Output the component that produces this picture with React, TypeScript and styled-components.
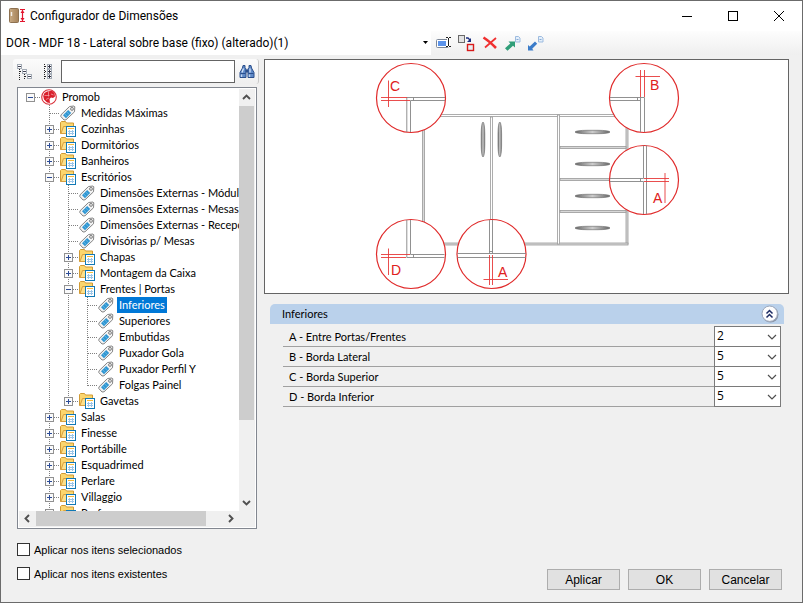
import React, { useState } from 'react';
import styled, { createGlobalStyle, css } from 'styled-components';

const GlobalStyle = createGlobalStyle`
  *, *::before, *::after { box-sizing: border-box; }
  body { margin: 0; background: #fff; }
  button, input, select { font: inherit; color: inherit; margin: 0; }
`;

const uiFont = 'Roboto, "Open Sans", sans-serif';
const listFont = 'Lato, Roboto, sans-serif';
const formFont = '"Liberation Sans", Arial, sans-serif';

const Window = styled.div`
  display: flex;
  flex-direction: column;
  height: calc(100vh - 7px);
  min-height: 360px;
  margin-right: 9px;
  border: 1px solid #6b6b6b;
  background: #f0f0f0;
  color: #000;
  font: 11px/16px ${listFont};
`;

const TitleBar = styled.header`
  display: flex;
  align-items: center;
  flex: none;
  height: 30px;
  padding-left: 8px;
  background: #fff;
`;

const Title = styled.h1`
  flex: 1;
  margin: 0 0 0 4px;
  font: 12px/16px ${uiFont};
`;

const CaptionButton = styled.button`
  display: flex;
  align-items: center;
  justify-content: center;
  width: 46px;
  height: 29px;
  padding: 0;
  border: 0;
  background: transparent;
`;

const Toolbar = styled.div`
  display: flex;
  align-items: center;
  flex: none;
  height: 24px;
  background: linear-gradient(#fdfdfd, #efefef);
`;

const ModelPicker = styled.div`
  display: grid;
  grid-template-columns: 1fr 12px;
  align-items: center;
  width: 430px;
  height: 24px;
  margin-right: 1px;
  background: #fff;
`;

const ModelSelect = styled.select`
  grid-area: 1 / 1 / 2 / 3;
  height: 24px;
  padding: 0 12px 0 5px;
  border: 0;
  appearance: none;
  background: transparent;
  font: 12px/16px ${uiFont};
`;

const SelectArrow = styled.svg`
  grid-area: 1 / 2;
  justify-self: center;
  pointer-events: none;
`;

const ToolButton = styled.button`
  display: flex;
  align-items: center;
  justify-content: center;
  flex: none;
  width: 23px;
  height: 22px;
  padding: 0;
  border: 0;
  background: transparent;
`;

const Body = styled.main`
  display: grid;
  grid-template-columns: 246px 1fr;
  flex: 1;
  min-height: 0;
  gap: 5px;
  padding: 4px 13px 12px 12px;
`;

const Sidebar = styled.aside`
  display: flex;
  flex-direction: column;
  min-height: 0;
  padding-bottom: 10px;
`;

const SearchBar = styled.div`
  display: flex;
  align-items: center;
  flex: none;
  height: 25px;
  margin-bottom: 3px;
  border-right: 1px solid #c8c8c8;
  border-radius: 3px;
  background: linear-gradient(#fbfbfb, #efefef);
`;

const SearchInput = styled.input`
  flex: 1;
  min-width: 0;
  height: 23px;
  margin-left: 2px;
  padding: 0 4px;
  border: 1px solid #646464;
  border-radius: 0;
  background: #fff;
`;

const TreeFrame = styled.div`
  display: grid;
  grid-template: minmax(0, 1fr) 16px / minmax(0, 1fr) 16px;
  flex: 1;
  min-height: 0;
  margin: 0 2px 3px 4px;
  padding: 1px;
  border: 1px solid #828790;
  background: #fff;
`;

const TreeList = styled.ul`
  margin: 0;
  padding: 0 0 0 2px;
  overflow: hidden;
  list-style: none;
`;

const TreeRow = styled.li`
  display: flex;
  height: 16px;
  white-space: nowrap;

  > svg, > button { flex: none; }
`;

const Expander = styled.button`
  display: block;
  width: 19px;
  height: 16px;
  padding: 0;
  border: 0;
  background: transparent;
  > svg { display: block; }
`;

const TreeLabel = styled.span<{ $selected?: boolean }>`
  margin-left: 3px;
  padding: 0 2px;
  ${p => p.$selected && css`
    background: #0078d7;
    color: #fff;
  `}
`;

const ScrollBar = styled.div<{ $vertical?: boolean }>`
  display: flex;
  flex-direction: ${p => (p.$vertical ? 'column' : 'row')};
  padding: ${p => (p.$vertical ? '0 1px 0 0' : '0 0 1px')};
  background: #f0f0f0;
`;

const ScrollButton = styled.button`
  display: flex;
  align-items: center;
  justify-content: center;
  flex: 0 0 17px;
  padding: 0;
  border: 0;
  background: transparent;
`;

const ScrollThumb = styled.div<{ $share: number }>`
  flex: ${p => p.$share} 0 0;
  background: #cdcdcd;
`;

const ScrollSpace = styled.div<{ $share: number }>`
  flex: ${p => p.$share} 0 0;
`;

const Corner = styled.div`
  background: #f0f0f0;
`;

const CheckRow = styled.label`
  display: flex;
  align-items: center;
  flex: none;
  gap: 4px;
  height: 13px;
  margin: 11px 0 0 4px;
  font-family: ${formFont};
`;

const CheckBox = styled.input`
  width: 13px;
  height: 13px;
  appearance: none;
  border: 1px solid #333;
  background: #fff;
  &:checked { box-shadow: inset 0 0 0 2px #fff; background: #333; }
`;

const Content = styled.section`
  display: flex;
  flex-direction: column;
  min-width: 0;
`;

const Preview = styled.div`
  flex: none;
  margin-bottom: 10px;
  border: 1px solid #646464;
  background: #fff;
  > svg { display: block; width: 100%; height: 233px; }
`;

const DrawingLetters = styled.g`
  fill: #e02020;
  font: 14px ${formFont};
`;

const GroupHeader = styled.div`
  display: flex;
  align-items: center;
  justify-content: space-between;
  flex: none;
  height: 20px;
  margin: 0 5px 2px 6px;
  padding: 0 5px 0 12px;
  border-radius: 5px 5px 0 0;
  background: #bad1eb;
`;

const GroupTitle = styled.h2`
  margin: 0;
  font: inherit;
`;

const CollapseButton = styled.button`
  display: flex;
  padding: 0;
  border: 0;
  background: transparent;
`;

const Properties = styled.div`
  margin: 0 8px 0 19px;
  border-top: 1px solid transparent;
`;

const Property = styled.div`
  display: flex;
  height: 20px;
  border-bottom: 1px solid #a0a0a0;
`;

const PropertyLabel = styled.label`
  flex: 1;
  padding: 2px 0 0 6px;
`;

const ValueBox = styled.div`
  display: grid;
  grid-template-columns: 1fr 16px;
  align-items: center;
  width: 67px;
  height: 21px;
  margin-top: -1px;
  border: 1px solid #7a7a7a;
  background: #fff;
`;

const ValueSelect = styled.select`
  grid-area: 1 / 1 / 2 / 3;
  width: 100%;
  height: 19px;
  padding: 0 16px 2px 2px;
  border: 0;
  appearance: none;
  background: transparent;
  font: 12px/16px "Open Sans", sans-serif;
`;

const Actions = styled.footer`
  display: flex;
  justify-content: flex-end;
  gap: 8px;
  margin-top: auto;
  padding-right: 7px;
`;

const ActionButton = styled.button`
  width: 73px;
  height: 21px;
  padding: 0;
  border: 1px solid #adadad;
  background: #e1e1e1;
  font: 12px/16px ${formFont};
`;

/* ---------- icons ---------- */

const AppIcon = () => (
  <svg width="17" height="16" viewBox="0 0 17 16" aria-hidden="true">
    <defs>
      <linearGradient id="door" x1="0" x2="1">
        <stop offset="0" stopColor="#c9ab84" /><stop offset="1" stopColor="#a5825a" />
      </linearGradient>
    </defs>
    <rect x="0.5" y="0.5" width="9" height="14" rx="1" fill="url(#door)" stroke="#8d7150" />
    <path d="M2.5 4v4" stroke="#f4f0ea" strokeWidth="1.4" />
    <path d="M11 1.5h5M11 13.5h5M13.5 2v11" stroke="#e2142d" strokeWidth="1.2" />
    <path d="M11.5 5l2-3 2 3zM11.5 10l2 3 2-3z" fill="#e2142d" />
  </svg>
);

const BinocularsIcon = () => (
  <svg width="16" height="16" viewBox="0 0 16 16" aria-hidden="true">
    <path d="M4 1.5h2v2l1 1.500v8.500H1V8.500L3.500 4zM12 1.500h-2v2L9 5v8.500h6V8.500L12.500 4z" fill="#5f8ac8" stroke="#2b4f8c" />
    <path d="M6.500 5.500h3v3h-3z" fill="#2b4f8c" />
    <path d="M3 8.500l1.500-4M11 8.500v-4" stroke="#d3e2f7" strokeWidth="1.300" />
    <path d="M1.500 9.500h5M9.500 9.500h5" stroke="#2b4f8c" />
    <path d="M2.500 10.500v2.500M10.500 10.500v2.500" stroke="#c3d6f0" strokeWidth="1.400" />
  </svg>
);

const CollapseTreeIcon = () => (
  <svg width="16" height="16" viewBox="0 0 16 16" shapeRendering="crispEdges" aria-hidden="true">
    <path d="M2.5 5v11M7.5 10v6M3 7.5h3M8 12.5h3" stroke="#222" strokeDasharray="1 1" fill="none" />
    <g fill="#fff" stroke="#a4acb6">
      <rect x="0.5" y="0.5" width="4" height="4" /><rect x="5.5" y="5.5" width="4" height="4" /><rect x="10.5" y="10.5" width="4" height="4" />
    </g>
    <path d="M1 2.5h3M6 7.5h3M11 12.5h3" stroke="#445" />
  </svg>
);

const ExpandTreeIcon = () => (
  <svg width="10" height="16" viewBox="0 0 10 16" shapeRendering="crispEdges" aria-hidden="true">
    <path d="M1.5 0v16M2 2.5h2M2 7.5h2M2 12.5h2" stroke="#222" strokeDasharray="1 1" fill="none" />
    <g fill="#fff" stroke="#a4acb6">
      <rect x="4.5" y="0.5" width="4" height="4" /><rect x="4.5" y="5.5" width="4" height="4" /><rect x="4.5" y="10.5" width="4" height="4" />
    </g>
    <path d="M5 2.5h3M5 7.5h3M5 12.5h3M6.5 1v3M6.5 6v3M6.5 11v3" stroke="#334" />
  </svg>
);

const RenameIcon = () => (
  <svg width="16" height="16" viewBox="0 0 16 16" aria-hidden="true">
    <rect x="0.5" y="4.500" width="12" height="8" rx="1" fill="#fff" stroke="#7c8798" />
    <rect x="2" y="6" width="8" height="5" fill="#5b93ea" />
    <path d="M12.500 3v9" stroke="#fff" strokeWidth="3" />
    <path d="M10 2.500h2M13 2.500h2M12.500 3v8M10 11.500h2M13 11.500h2" stroke="#222" fill="none" />
  </svg>
);

const ReplaceIcon = () => (
  <svg width="17" height="17" viewBox="0 0 17 17" aria-hidden="true">
    <rect x="0.500" y="0.500" width="6" height="7" fill="#e4e4e4" stroke="#6a6a6a" />
    <path d="M8 3h2l2 2" fill="none" stroke="#1d2f80" strokeWidth="1.300" />
    <path d="M13 3v4H9z" fill="#1d2f80" />
    <rect x="9.500" y="9.500" width="6" height="6" fill="#e8eef2" stroke="#d81a1a" strokeWidth="1.400" />
  </svg>
);

const DeleteIcon = () => (
  <svg width="16" height="16" viewBox="0 0 16 16" aria-hidden="true">
    <path d="M1.500 2.500Q7 6 14 13" stroke="#f03030" strokeWidth="2.600" fill="none" />
    <path d="M14 3L3 12.500" stroke="#f03030" strokeWidth="1.700" fill="none" />
  </svg>
);

const ExportIcon = ({ color, down }: { color: string; down?: boolean }) => (
  <svg width="17" height="17" viewBox="0 0 17 17" aria-hidden="true">
    <path d="M11.500 1.500h3l1.500 1.500v4h-4.500z" fill="#e4effb" stroke="#9dbbdf" />
    <path d="M12.500 4.500h2" stroke="#86abd4" />
    {down
      ? <path d="M1 15.500V10l1.700 1.500L8 6.500l2.200 2.200-5 5L6.500 15.500z" fill={color} />
      : <path d="M4.500 6.500h6.500v6l-2-1.700-5.500 5L1 13.300 6.300 8.500z" fill={color} />}
  </svg>
);

const NodeSvg = styled.svg`
  margin-left: 1px;
`;

const BrandIcon = () => (
  <NodeSvg width="16" height="16" viewBox="0 0 16 16" aria-hidden="true">
    <circle cx="8" cy="8" r="7.300" fill="#fff" stroke="#d9303a" strokeWidth="1.100" />
    <path d="M6 2.500l5-.8 2.500 2.300.5 3.500-2 1.500-2-.5-1.500 1.500.5 4-3-.5L3 10.500 2.200 7l1.300-3z" fill="#d9202c" />
    <path d="M7.500 2.500v5M3.500 6.500h5M10 5l2.500 1M5 10.500l3-1.500" stroke="#f3b0b4" strokeWidth="0.700" />
  </NodeSvg>
);

const TagIcon = () => (
  <NodeSvg width="16" height="16" viewBox="0 0 16 16" aria-hidden="true">
    <path d="M9.500 1.500l4.500-.5.800.8-.3 5-8.500 8-2 .2L.8 11.500l.2-1.700z" fill="#f2f2f2" stroke="#858585" />
    <path d="M3 10.200L8.200 5l3 3L6 13.200z" fill="#2f96d2" />
    <path d="M4.500 8.700l3 3M6.500 6.700l3 3" stroke="#78c2ea" strokeWidth="0.700" />
    <circle cx="12" cy="3.900" r="1.400" fill="#fff" stroke="#777" />
  </NodeSvg>
);

const FolderIcon = () => (
  <NodeSvg width="16" height="16" viewBox="0 0 16 16" aria-hidden="true">
    <path d="M.5 12.500V1.500L1.500.5h4l1 1.500h7v10.500z" fill="#fbd66e" stroke="#d09a35" />
    <path d="M1 12.500L3.500 5.500h11V12.500z" fill="#fde08a" stroke="#d9a040" />
    <rect x="6.500" y="5.500" width="9" height="10" fill="#fff" stroke="#1179b5" />
    <path d="M8 7.500h6" stroke="#f5bc3c" />
    <path d="M8 10.500h6M8 12.500h6M9.500 9v5M12.500 9v5" stroke="#9cc6e8" shapeRendering="crispEdges" />
  </NodeSvg>
);

const Chevron = ({ dir }: { dir: 'up' | 'down' | 'left' | 'right' }) => {
  const d = { up: 'M1 6l3.500-3.500L8 6', down: 'M1 3l3.500 3.500L8 3', left: 'M6 1L2.500 4.500 6 8', right: 'M3 1l3.500 3.500L3 8' }[dir];
  return (
    <svg width="9" height="9" viewBox="0 0 9 9" aria-hidden="true">
      <path d={d} fill="none" stroke="#505050" strokeWidth="1.900" />
    </svg>
  );
};

const CollapseIcon = () => (
  <svg width="18" height="18" viewBox="0 0 18 18" aria-hidden="true">
    <circle cx="9.500" cy="9.500" r="8" fill="#8c96a8" />
    <circle cx="8.700" cy="8.700" r="7.700" fill="#fdfdfe" stroke="#9aa6ba" />
    <path d="M5.500 8.500l3-3 3 3M5.500 12.500l3-3 3 3" fill="none" stroke="#1c2b63" strokeWidth="1.500" />
  </svg>
);

/* ---------- tree ---------- */

type Guide = 'none' | 'line' | 'tee' | 'end' | 'root';

const GuideLines = ({ kind, sign }: { kind: Guide; sign?: '+' | '-' }) => (
  <svg width="19" height="16" viewBox="0 0 19 16" shapeRendering="crispEdges" aria-hidden="true">
    {(kind === 'line' || kind === 'tee') && <path d="M9.500 0v16" stroke="#808080" strokeDasharray="1 1" />}
    {kind === 'end' && <path d="M9.500 0v9" stroke="#808080" strokeDasharray="1 1" />}
    {(kind === 'tee' || kind === 'end' || kind === 'root') && <path d="M10 8.500h9" stroke="#808080" strokeDasharray="1 1" />}
    {sign && (
      <>
        <rect x="5.500" y="4.500" width="8" height="8" fill="#fafafa" stroke="#919191" />
        <path d={sign === '+' ? 'M7 8.500h5M9.500 6v5' : 'M7 8.500h5'} stroke="#2c4b96" />
      </>
    )}
  </svg>
);

interface Node {
  label: string;
  guides: Guide[];
  sign?: '+' | '-';
  icon?: 'tag' | 'brand';
}

const top = (label: string): Node => ({ label, guides: ['none', 'tee'], sign: '+' });
const deep = (label: string, last = false): Node => ({
  label, guides: ['none', 'line', 'line', last ? 'end' : 'tee'], icon: 'tag',
});

const nodes: Node[] = [
  { label: 'Promob', guides: ['root'], sign: '-', icon: 'brand' },
  { label: 'Medidas Máximas', guides: ['none', 'tee'], icon: 'tag' },
  top('Cozinhas'),
  top('Dormitórios'),
  top('Banheiros'),
  { label: 'Escritórios', guides: ['none', 'tee'], sign: '-' },
  { label: 'Dimensões Externas - Módulos', guides: ['none', 'line', 'tee'], icon: 'tag' },
  { label: 'Dimensões Externas - Mesas', guides: ['none', 'line', 'tee'], icon: 'tag' },
  { label: 'Dimensões Externas - Recepção', guides: ['none', 'line', 'tee'], icon: 'tag' },
  { label: 'Divisórias p/ Mesas', guides: ['none', 'line', 'tee'], icon: 'tag' },
  { label: 'Chapas', guides: ['none', 'line', 'tee'], sign: '+' },
  { label: 'Montagem da Caixa', guides: ['none', 'line', 'tee'], sign: '+' },
  { label: 'Frentes | Portas', guides: ['none', 'line', 'tee'], sign: '-' },
  deep('Inferiores'),
  deep('Superiores'),
  deep('Embutidas'),
  deep('Puxador Gola'),
  deep('Puxador Perfil Y'),
  deep('Folgas Painel', true),
  { label: 'Gavetas', guides: ['none', 'line', 'end'], sign: '+' },
  top('Salas'),
  top('Finesse'),
  top('Portábille'),
  top('Esquadrimed'),
  top('Perlare'),
  top('Villaggio'),
  top('Performa'),
];

const NodeIcon = ({ icon }: { icon?: 'tag' | 'brand' }) =>
  icon === 'tag' ? <TagIcon /> : icon === 'brand' ? <BrandIcon /> : <FolderIcon />;

const Tree = () => {
  const [selected, setSelected] = useState('Inferiores');
  return (
    <TreeList role="tree" aria-label="Dimensões">
      {nodes.map(node => (
        <TreeRow
          key={node.label}
          role="treeitem"
          aria-level={node.guides.length}
          aria-selected={selected === node.label}
          onClick={() => setSelected(node.label)}
        >
          {node.guides.map((kind, i) =>
            node.sign && i === node.guides.length - 1 ? (
              <Expander key={i} type="button" aria-label={node.sign === '+' ? 'Expandir' : 'Recolher'}>
                <GuideLines kind={kind} sign={node.sign} />
              </Expander>
            ) : (
              <GuideLines key={i} kind={kind} />
            ),
          )}
          <NodeIcon icon={node.icon} />
          <TreeLabel $selected={selected === node.label}>{node.label}</TreeLabel>
        </TreeRow>
      ))}
    </TreeList>
  );
};

/* ---------- cabinet drawing ---------- */

const bubbles: [number, number][] = [[411, 98], [644, 98], [644, 180], [411, 254], [491.5, 254]];

const CabinetDrawing = () => (
  <svg viewBox="265 60 523 233" role="img" aria-label="Folgas das frentes inferiores">
    <defs>
      <linearGradient id="pullV" x1="0" x2="1">
        <stop offset="0" stopColor="#666" /><stop offset="0.500" stopColor="#ccc" /><stop offset="1" stopColor="#666" />
      </linearGradient>
      <linearGradient id="pullH" x1="0" x2="1">
        <stop offset="0" stopColor="#666" /><stop offset="0.500" stopColor="#ccc" /><stop offset="1" stopColor="#666" />
      </linearGradient>
    </defs>
    <g fill="#d8d8d8" stroke="#9a9a9a" strokeWidth="0.800">
      <rect x="422.500" y="115" width="2" height="130" />
      <rect x="626" y="115" width="2" height="129" />
      <rect x="424" y="243" width="204" height="2" />
      <g fill="#fff">
        <rect x="424" y="114.500" width="204" height="2" />
        <rect x="490.500" y="117" width="2" height="126" />
        <rect x="557.500" y="115" width="2" height="129" />
      </g>
      <rect x="560" y="146.500" width="66" height="2" />
      <rect x="560" y="178.500" width="66" height="2" />
      <rect x="560" y="210.500" width="66" height="2" />
    </g>
    <g fill="url(#pullV)" stroke="#777" strokeWidth="0.700">
      <rect x="481.200" y="122" width="3.600" height="35" rx="1.800" ry="12" />
      <rect x="498" y="122" width="3.600" height="35" rx="1.800" ry="12" />
    </g>
    <g fill="url(#pullH)" stroke="#777" strokeWidth="0.700">
      {[132, 164, 196, 228].map(y => <rect key={y} x="575" y={y - 1.7} width="35" height="3.400" rx="12" ry="1.700" />)}
    </g>
    <g fill="#fff" stroke="#e02b2b" strokeWidth="1.200">
      {bubbles.map(([x, y]) => <circle key={`${x}-${y}`} cx={x} cy={y} r="34.500" />)}
    </g>
    <g fill="none" stroke="#858585" strokeWidth="0.900">
      <path d="M445 97.500H406.800V132M445 100.500H410.500V132M413.500 97.500v3" />
      <path d="M610 97.500H644.500V132M610 100.500H640.500M640.500 97.500V132M637.500 97.500v3" />
      <path d="M643.500 145.500V178.500M646.500 145.500V214M643.500 181.500V214M610 178.500H643.500M610 181.500H643.500M640.500 178.500v3" />
      <path d="M406.800 220V257.500H444.500M410.500 220V254.500H444.500M413.500 254.500v3" />
      <path d="M489.500 220V253.500M492.500 220V253.500M489.500 251.500h3M457.500 253.500H526M457.500 257.500H526" />
    </g>
    <g fill="none" stroke="#e63a3a" strokeWidth="0.900">
      <path d="M381 97.500H407M381 100.500H410M388.500 80.500V107" />
      <path d="M640.500 70V97M644.500 70V97M635.500 76.500H660" />
      <path d="M644 178.500H669M644 181.500H669M665 173V203" />
      <path d="M381 254.500H410M381 257.500H406M388.500 248.500V275" />
      <path d="M489.500 255V285M492.500 255V285M483.500 279.500H508" />
    </g>
    <DrawingLetters>
      <text x="390" y="91">C</text>
      <text x="650" y="90">B</text>
      <text x="653" y="203">A</text>
      <text x="391" y="275">D</text>
      <text x="498" y="277">A</text>
    </DrawingLetters>
  </svg>
);

const properties = [
  { id: 'a', label: 'A - Entre Portas/Frentes', value: '2' },
  { id: 'b', label: 'B - Borda Lateral', value: '5' },
  { id: 'c', label: 'C - Borda Superior', value: '5' },
  { id: 'd', label: 'D - Borda Inferior', value: '5' },
];

export default function App() {
  return (
    <>
      <GlobalStyle />
      <Window>
        <TitleBar>
          <AppIcon />
          <Title>Configurador de Dimensões</Title>
          <CaptionButton type="button" aria-label="Minimizar">
            <svg width="10" height="10"><path d="M0 5.500h10" stroke="#000" /></svg>
          </CaptionButton>
          <CaptionButton type="button" aria-label="Maximizar">
            <svg width="10" height="10"><rect x="0.500" y="0.500" width="9" height="9" fill="none" stroke="#000" /></svg>
          </CaptionButton>
          <CaptionButton type="button" aria-label="Fechar">
            <svg width="10" height="10"><path d="M0 0l10 10M10 0L0 10" stroke="#000" /></svg>
          </CaptionButton>
        </TitleBar>

        <Toolbar>
          <ModelPicker>
            <ModelSelect aria-label="Modelo">
              <option>DOR - MDF 18 - Lateral sobre base (fixo) (alterado)(1)</option>
            </ModelSelect>
            <SelectArrow width="7" height="4" viewBox="0 0 7 4" aria-hidden="true"><path d="M1 0h5L3.500 3z" /></SelectArrow>
          </ModelPicker>
          <ToolButton type="button" aria-label="Renomear"><RenameIcon /></ToolButton>
          <ToolButton type="button" aria-label="Substituir"><ReplaceIcon /></ToolButton>
          <ToolButton type="button" aria-label="Excluir"><DeleteIcon /></ToolButton>
          <ToolButton type="button" aria-label="Exportar"><ExportIcon color="#2f9e78" /></ToolButton>
          <ToolButton type="button" aria-label="Importar"><ExportIcon color="#3b7cc9" down /></ToolButton>
        </Toolbar>

        <Body>
          <Sidebar>
            <SearchBar>
              <ToolButton type="button" aria-label="Recolher tudo"><CollapseTreeIcon /></ToolButton>
              <ToolButton type="button" aria-label="Expandir tudo"><ExpandTreeIcon /></ToolButton>
              <SearchInput type="text" aria-label="Pesquisar" />
              <ToolButton type="button" aria-label="Localizar"><BinocularsIcon /></ToolButton>
            </SearchBar>
            <TreeFrame>
              <Tree />
              <ScrollBar $vertical>
                <ScrollButton type="button" aria-label="Rolar para cima"><Chevron dir="up" /></ScrollButton>
                <ScrollThumb $share={314} />
                <ScrollSpace $share={74} />
                <ScrollButton type="button" aria-label="Rolar para baixo"><Chevron dir="down" /></ScrollButton>
              </ScrollBar>
              <ScrollBar>
                <ScrollButton type="button" aria-label="Rolar para a esquerda"><Chevron dir="left" /></ScrollButton>
                <ScrollThumb $share={170} />
                <ScrollSpace $share={16} />
                <ScrollButton type="button" aria-label="Rolar para a direita"><Chevron dir="right" /></ScrollButton>
              </ScrollBar>
              <Corner />
            </TreeFrame>
            <CheckRow><CheckBox type="checkbox" />Aplicar nos itens selecionados</CheckRow>
            <CheckRow><CheckBox type="checkbox" />Aplicar nos itens existentes</CheckRow>
          </Sidebar>

          <Content>
            <Preview><CabinetDrawing /></Preview>
            <GroupHeader>
              <GroupTitle>Inferiores</GroupTitle>
              <CollapseButton type="button" aria-label="Recolher grupo"><CollapseIcon /></CollapseButton>
            </GroupHeader>
            <Properties>
              {properties.map(p => (
                <Property key={p.id}>
                  <PropertyLabel htmlFor={p.id}>{p.label}</PropertyLabel>
                  <ValueBox>
                    <ValueSelect id={p.id} defaultValue={p.value}>
                      <option>2</option>
                      <option>5</option>
                    </ValueSelect>
                    <SelectArrow width="10" height="6" viewBox="0 0 10 6" aria-hidden="true">
                      <path d="M1 1l4 4 4-4" fill="none" stroke="#505050" strokeWidth="1.200" />
                    </SelectArrow>
                  </ValueBox>
                </Property>
              ))}
            </Properties>
            <Actions>
              <ActionButton type="button">Aplicar</ActionButton>
              <ActionButton type="button">OK</ActionButton>
              <ActionButton type="button">Cancelar</ActionButton>
            </Actions>
          </Content>
        </Body>
      </Window>
    </>
  );
}
